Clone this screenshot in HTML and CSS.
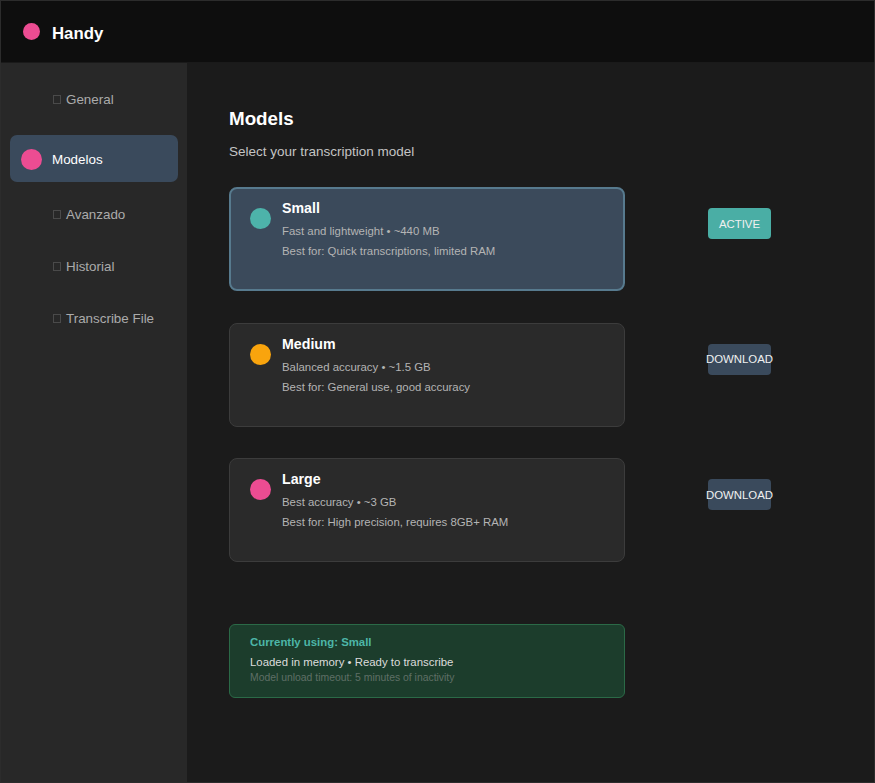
FILE: index.html
```html
<!DOCTYPE html>
<html lang="en">
<head>
<meta charset="utf-8">
<title>Handy</title>
<link rel="stylesheet" href="styles.css">
</head>
<body>
<div class="app">
  <header class="topbar">
    <span class="logo-dot"></span>
    <span class="brand">Handy</span>
  </header>
  <div class="body">
    <nav class="sidebar">
      <div class="nav-item"><span class="tofu"></span><span>General</span></div>
      <div class="nav-item active"><span class="nav-dot"></span><span>Modelos</span></div>
      <div class="nav-item"><span class="tofu"></span><span>Avanzado</span></div>
      <div class="nav-item"><span class="tofu"></span><span>Historial</span></div>
      <div class="nav-item"><span class="tofu"></span><span>Transcribe File</span></div>
    </nav>
    <main class="main">
      <h1 class="title">Models</h1>
      <p class="subtitle">Select your transcription model</p>

      <div class="models">
        <div class="row">
          <div class="card selected">
            <span class="dot teal"></span>
            <div class="info">
              <div class="name">Small</div>
              <div class="meta">Fast and lightweight • ~440 MB</div>
              <div class="meta">Best for: Quick transcriptions, limited RAM</div>
            </div>
          </div>
          <div class="btn btn-active">ACTIVE</div>
        </div>
        <div class="row">
          <div class="card">
            <span class="dot orange"></span>
            <div class="info">
              <div class="name">Medium</div>
              <div class="meta">Balanced accuracy • ~1.5 GB</div>
              <div class="meta">Best for: General use, good accuracy</div>
            </div>
          </div>
          <div class="btn btn-download">DOWNLOAD</div>
        </div>
        <div class="row">
          <div class="card">
            <span class="dot pink"></span>
            <div class="info">
              <div class="name">Large</div>
              <div class="meta">Best accuracy • ~3 GB</div>
              <div class="meta">Best for: High precision, requires 8GB+ RAM</div>
            </div>
          </div>
          <div class="btn btn-download">DOWNLOAD</div>
        </div>
      </div>

      <div class="status">
        <div class="status-title">Currently using: Small</div>
        <div class="status-line">Loaded in memory • Ready to transcribe</div>
        <div class="status-note">Model unload timeout: 5 minutes of inactivity</div>
      </div>
    </main>
  </div>
</div>
</body>
</html>
```

FILE: styles.css
```css
* { box-sizing: border-box; }

html, body {
  margin: 0;
  padding: 0;
  background: #1b1b1b;
}

body {
  font-family: "Liberation Sans", Arial, sans-serif;
  color: #e6e6e6;
}

.app {
  width: 875px;
  height: 783px;
  display: flex;
  flex-direction: column;
  border: 1px solid #2c2c2c;
  overflow: hidden;
}

.topbar {
  height: 62px;
  flex: 0 0 62px;
  background: #0e0e0e;
  border-bottom: 1px solid #1a1a1a;
  display: flex;
  align-items: center;
  padding-left: 22px;
  padding-top: 1px;
}

.logo-dot {
  width: 17px;
  height: 17px;
  border-radius: 50%;
  background: #ec4c92;
  margin-top: -2px;
}

.brand {
  margin-left: 12px;
  margin-top: 3px;
  font-size: 16.8px;
  font-weight: bold;
  color: #ffffff;
}

.body {
  flex: 1;
  display: flex;
  min-height: 0;
}

.sidebar {
  width: 186px;
  flex: 0 0 186px;
  background: #282828;
  padding: 10px 9px 0 9px;
  display: flex;
  flex-direction: column;
}

.nav-item {
  height: 52px;
  display: flex;
  align-items: center;
  padding-left: 43px;
  font-size: 13.4px;
  color: #ababab;
}

.tofu {
  width: 8px;
  height: 9px;
  border: 1px solid #4a4a4a;
  margin-right: 5px;
  margin-top: 1px;
}

.nav-item.active {
  height: 47px;
  margin: 10px 0 6px 0;
  background: #3a4a5c;
  border-radius: 7px;
  padding-left: 11px;
  padding-top: 2px;
  color: #ffffff;
}

.nav-dot {
  width: 21px;
  height: 21px;
  border-radius: 50%;
  background: #ec4c92;
  margin-right: 10px;
  margin-top: -1px;
}

.main {
  flex: 1;
  padding: 45px 0 0 42px;
}

.title {
  margin: 0;
  font-size: 18.8px;
  line-height: 22px;
  font-weight: bold;
  color: #ffffff;
}

.subtitle {
  margin: 14px 0 0 0;
  font-size: 13.5px;
  line-height: 16px;
  color: #c4c4c4;
}

.models {
  margin-top: 27px;
  display: flex;
  flex-direction: column;
  gap: 31.5px;
}

.row {
  display: flex;
  align-items: flex-start;
}

.card {
  width: 396px;
  height: 104px;
  flex: 0 0 396px;
  background: #2a2a2a;
  border: 1px solid #3c3c3c;
  border-radius: 8px;
  padding: 11px 19px 0 20px;
  display: flex;
  align-items: flex-start;
}

.card.selected {
  background: #3b4a5b;
  border: 2px solid #577a8e;
  padding: 10px 18px 0 19px;
}

.dot {
  width: 21px;
  height: 21px;
  flex: 0 0 21px;
  border-radius: 50%;
  margin-top: 9px;
  margin-right: 11px;
}

.dot.teal { background: #4db3aa; }
.dot.orange { background: #f9a40d; }
.dot.pink { background: #ec4c92; }

.name {
  font-size: 14.2px;
  line-height: 18px;
  font-weight: bold;
  color: #ffffff;
  margin-bottom: 4px;
}

.meta {
  font-size: 11.4px;
  line-height: 20px;
  color: #b4b4b4;
}

.btn {
  width: 63px;
  height: 31px;
  margin-left: 83px;
  margin-top: 21px;
  border-radius: 4px;
  display: flex;
  align-items: center;
  justify-content: center;
  white-space: nowrap;
  font-size: 11.4px;
  color: #f0f0f0;
}

.btn-active { background: #4aaea5; }
.btn-download { background: #3a4a5c; }

.status {
  margin-top: 62px;
  width: 396px;
  height: 74px;
  background: #1c3d2c;
  border: 1px solid #2b6a47;
  border-radius: 6px;
  padding: 10px 20px 0 20px;
}

.status-title {
  font-size: 11.4px;
  line-height: 14px;
  font-weight: bold;
  color: #4db6a8;
}

.status-line {
  margin-top: 5px;
  font-size: 11.4px;
  line-height: 16px;
  color: #dcdcdc;
}

.status-note {
  margin-top: 1px;
  font-size: 10.4px;
  line-height: 14px;
  color: #5f6f66;
}
```
